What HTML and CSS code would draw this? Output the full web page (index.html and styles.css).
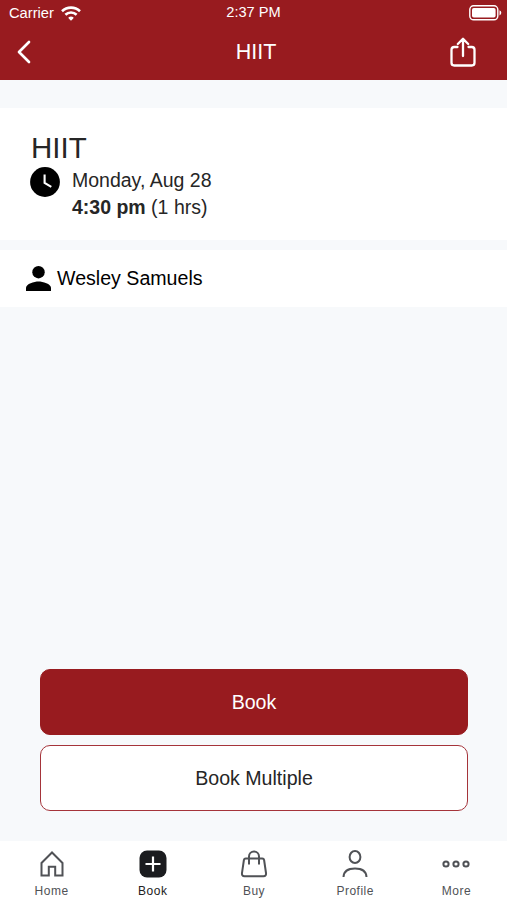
FILE: index.html
```html
<!DOCTYPE html>
<html lang="en">
<head>
<meta charset="utf-8">
<title>HIIT</title>
<link rel="stylesheet" href="styles.css">
</head>
<body>
<div class="app">
  <header class="header">
    <div class="status">
      <div class="carrier">
        <span>Carrier</span>
        <svg width="20" height="15" viewBox="0 0 20 15" fill="none" stroke="#fff" stroke-width="2.6"><path d="M1 5.200a13 13 0 0 1 18 0M4.400 8.800a8 8 0 0 1 11.200 0"/><path d="M10 14.800l-2.300-2.400q-.6-.9.300-1.400a4 4 0 0 1 4 0q.9.500.3 1.400z" fill="#fff" stroke="none"/></svg>
      </div>
      <span class="clock">2:37 PM</span>
      <svg class="battery" width="33" height="16" viewBox="0 0 33 16"><rect x=".8" y=".8" width="28" height="14" rx="3.8" fill="none" stroke="#fff" stroke-width="1.4"/><rect x="3" y="3" width="23.6" height="9.6" rx="1.8" fill="#fff"/><path d="M30.5 5.2q1.8.8 1.8 2.6t-1.8 2.6z" fill="#fff"/></svg>
    </div>
    <nav class="navbar">
      <svg width="15" height="24" viewBox="0 0 15 24" fill="none" stroke="#fff" stroke-width="2.7" stroke-linecap="round" stroke-linejoin="round"><path d="M13 2L3 12l10 10"/></svg>
      <h1>HIIT</h1>
      <svg width="26" height="31" viewBox="0 0 26 31" fill="none" stroke="#fff" stroke-width="2.3" stroke-linecap="round" stroke-linejoin="round"><path d="M7.500 10H4.200Q1.500 10 1.500 12.700V25.800Q1.500 28.500 4.200 28.500H21.800Q24.500 28.500 24.500 25.800V12.700Q24.500 10 21.800 10H18.500M13 19V2M7.800 7L13 1.800 18.200 7"/></svg>
    </nav>
  </header>
  <section class="card event">
    <h2>HIIT</h2>
    <div class="when">
      <svg width="30" height="30" viewBox="0 0 30 30"><circle cx="15" cy="15" r="14.900"/><path d="M14.600 7.500v8.300l6.700 4" fill="none" stroke="#fff" stroke-width="2.100"/></svg>
      <div><p>Monday, Aug 28</p><p><b>4:30 pm</b> (1 hrs)</p></div>
    </div>
  </section>
  <section class="card teacher">
    <svg width="25" height="25" viewBox="0 0 25 25"><circle cx="12.500" cy="6.200" r="6.200"/><path d="M0 25v-3.200c0-4 8.200-6.300 12.500-6.300S25 17.800 25 21.800V25z"/></svg>
    <span>Wesley Samuels</span>
  </section>
  <div class="actions">
    <button class="btn primary">Book</button>
    <button class="btn outline">Book Multiple</button>
  </div>
  <nav class="tabs">
    <a class="tab"><svg width="30" height="30" viewBox="0 0 30 30"><path d="M4.500 14L15 3.500 25.500 14v12.500h-7.300v-8.700h-6.400v8.700H4.500z"/></svg><span>Home</span></a>
    <a class="tab active"><svg width="30" height="30" viewBox="0 0 30 30"><rect class="tile" x="1.500" y="1.500" width="27" height="27" rx="7.500"/><path class="plus" d="M15 7.500v15M7.500 15h15"/></svg><span>Book</span></a>
    <a class="tab"><svg width="30" height="30" viewBox="0 0 30 30"><path d="M6.700 9.500h16.600q1.500 0 1.800 1.500L27 24q.4 3.200-2.500 3.200h-19Q2.600 27.200 3 24L4.900 11q.3-1.500 1.800-1.500zM10 15.500V7.500a5 5 0 0 1 10 0v8"/></svg><span>Buy</span></a>
    <a class="tab"><svg width="30" height="30" viewBox="0 0 30 30"><ellipse cx="15" cy="8" rx="5.400" ry="6"/><path d="M3.500 28C3.800 22 7.500 19.500 15 19.500s11.200 2.500 11.500 8.500"/></svg><span>Profile</span></a>
    <a class="tab"><svg width="30" height="30" viewBox="0 0 30 30"><circle cx="5" cy="15" r="2.600"/><circle cx="15" cy="15" r="2.600"/><circle cx="25" cy="15" r="2.600"/></svg><span>More</span></a>
  </nav>
</div>
</body>
</html>
```
FILE: styles.css
```css
* { box-sizing: border-box; }
body { margin: 0; font-family: "Liberation Sans", Arial, sans-serif; color: #262626; }
h1, h2, p { margin: 0; font-weight: 400; }
svg { display: block; flex: none; }
.app { height: 900px; display: flex; flex-direction: column; background: #f7f9fb; }
.header { height: 80px; background: #981b1f; color: #fff; }
.status { height: 25px; padding: 0 5px 0 9px; display: grid; grid-template-columns: 1fr auto 1fr; align-items: center; font-size: 14.7px; }
.carrier { display: flex; align-items: center; gap: 7px; }
.carrier svg { margin-top: 1px; }
.clock { padding: 0 4px 2px 0; font-size: 14.6px; }
.battery { justify-self: end; }
.navbar { height: 54px; padding: 0 31px 0 16px; display: grid; grid-template-columns: 1fr auto 1fr; align-items: center; }
.navbar h1 { font-size: 21.5px; padding-left: 20px; }
.navbar svg:last-child { justify-self: end; }
.card { background: #fff; }
.event { height: 132px; margin-top: 28px; padding: 22px 30px 0; }
.event h2 { font-size: 29.5px; line-height: 35px; padding-left: 1px; }
.when { display: flex; gap: 12px; padding-top: 2px; font-size: 19.5px; line-height: 27px; }
.teacher { height: 57px; margin-top: 10px; padding-left: 26px; display: flex; align-items: center; gap: 6px; font-size: 19.6px; color: #000; }
.actions { margin-top: auto; padding: 0 39px 30px 40px; display: flex; flex-direction: column; gap: 10px; }
.btn { height: 66px; border: 1px solid #a5343a; border-radius: 10px; font: 19.6px "Liberation Sans", Arial, sans-serif; }
.primary { background: #981b1f; border-color: #981b1f; color: #fff; }
.outline { background: #fff; color: #262626; }
.tabs { height: 59px; padding: 8px 0 0 1px; background: #fff; display: grid; grid-template-columns: repeat(5, 1fr); }
.tab { display: flex; flex-direction: column; align-items: center; font-size: 12px; line-height: 16px; letter-spacing: .5px; gap: 4px; color: #505256; }
.tab svg { fill: none; stroke: #505256; stroke-width: 2; }
.tab.active { color: #222; }
.tab .tile { fill: #1b1c1f; stroke: none; }
.tab .plus { stroke: #fff; stroke-width: 2.2; }
```
